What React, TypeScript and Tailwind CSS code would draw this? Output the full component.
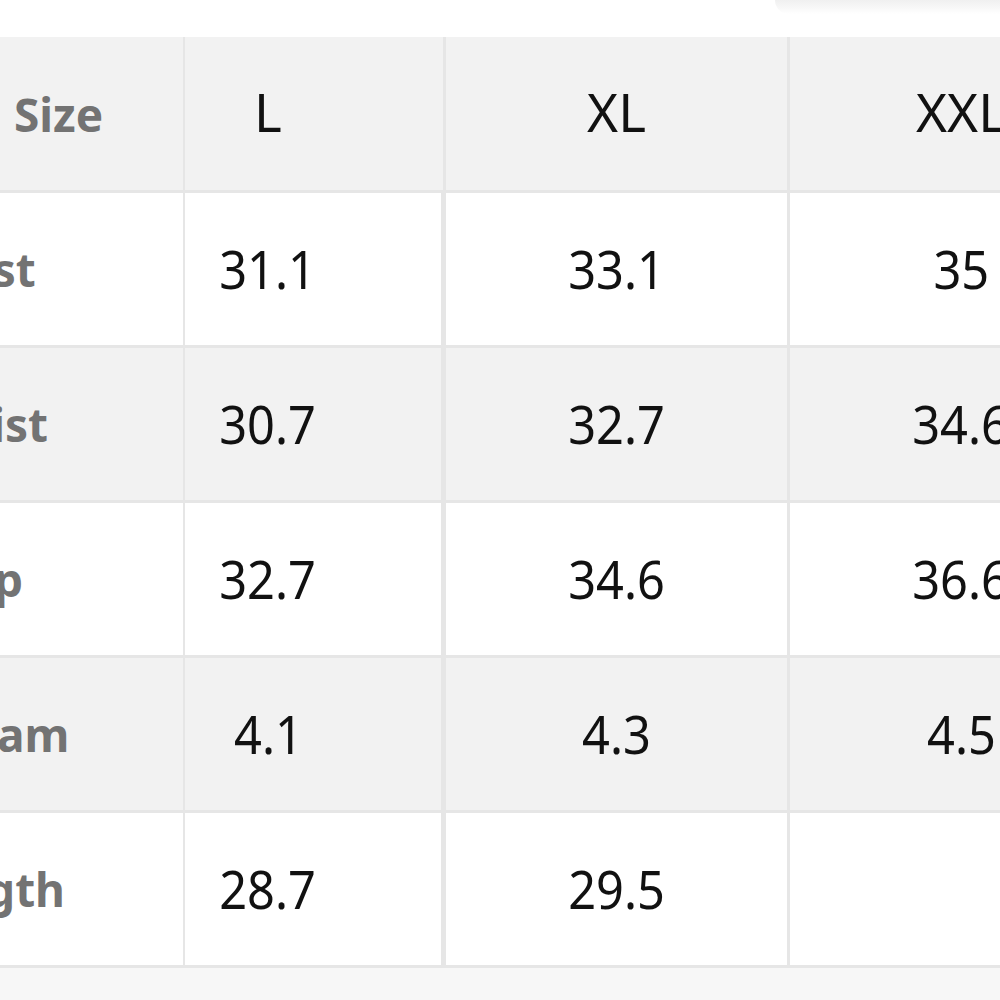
import React from "react";

const rows = [
  { label: "Bust", l: "31.1", xl: "33.1", xxl: "35", bg: "bg-white" },
  { label: "Waist", l: "30.7", xl: "32.7", xxl: "34.6", bg: "bg-[#f2f2f2]" },
  { label: "Hip", l: "32.7", xl: "34.6", xxl: "36.6", bg: "bg-white" },
  { label: "Inseam", l: "4.1", xl: "4.3", xxl: "4.5", bg: "bg-[#f2f2f2]" },
  { label: "Length", l: "28.7", xl: "29.5", xxl: "", bg: "bg-white" },
];

const num = "inline-block text-[53px] text-[#111] leading-none scale-x-[0.92] -translate-y-[1px]";

export default function App() {
  return (
    <div
      className="w-[1000px] h-[1000px] overflow-hidden bg-[#f7f7f7] flex flex-col"
      style={{ fontFamily: '"Noto Sans", "Open Sans", sans-serif' }}
    >
      {/* top strip */}
      <div className="h-[37px] bg-white flex justify-end shrink-0">
        <div className="w-[225px] h-[14px] bg-gradient-to-b from-[#f0f0f0] via-[#f7f7f7] to-white rounded-bl-[60px]" />
      </div>

      <div className="-ml-[183px] w-[1315px] flex flex-col shrink-0">
        {/* header */}
        <div className="flex h-[156px] bg-[#f2f2f2] border-b-[3px] border-[#e6e6e6]">
          <div className="w-[368px] shrink-0 border-r-2 border-[#e6e6e6] flex items-center pl-[197px]">
            <span className="text-[46px] font-bold text-[#737373] leading-none">Size</span>
          </div>
          <div className="w-[261px] shrink-0 border-r-[3px] border-[#e6e6e6] flex items-center justify-center pr-[92px]">
            <span className="text-[53px] text-[#111] leading-none -translate-y-[2px] inline-block">L</span>
          </div>
          <div className="w-[344px] shrink-0 border-r-[3px] border-[#e6e6e6] flex items-center justify-center">
            <span className="text-[53px] text-[#111] leading-none -translate-y-[2px] inline-block">XL</span>
          </div>
          <div className="w-[342px] shrink-0 flex items-center justify-center">
            <span className="text-[53px] text-[#111] leading-none -translate-y-[2px] inline-block">XXL</span>
          </div>
        </div>

        {rows.map((r) => (
          <div key={r.label} className={`flex h-[155px] border-b-[3px] border-[#e6e6e6] ${r.bg}`}>
            <div className="w-[368px] shrink-0 border-r-2 border-[#e6e6e6] flex items-center justify-center pr-[32px]">
              <span className="text-[46px] font-bold text-[#737373] leading-none">{r.label}</span>
            </div>
            <div className="w-[261px] shrink-0 border-r-[5px] border-[#e6e6e6] flex items-center justify-center pr-[90px]">
              <span className={num}>{r.l}</span>
            </div>
            <div className="w-[344px] shrink-0 border-r-[3px] border-[#e6e6e6] flex items-center justify-center">
              <span className={num}>{r.xl}</span>
            </div>
            <div className="w-[342px] shrink-0 flex items-center justify-center">
              <span className={num}>{r.xxl}</span>
            </div>
          </div>
        ))}
      </div>
    </div>
  );
}
